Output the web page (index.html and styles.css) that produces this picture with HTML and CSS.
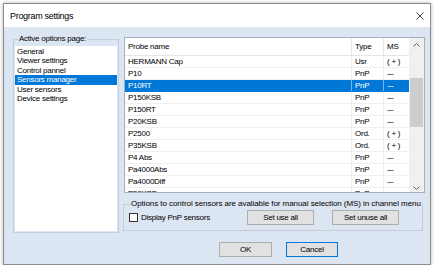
FILE: index.html
```html
<!DOCTYPE html>
<html lang="en">
<head>
    <meta charset="UTF-8">
    <meta name="viewport" content="width=device-width, initial-scale=1.0">
    <title>Program settings</title>
    <link rel="stylesheet" href="styles.css">
</head>
<body>
    <div class="window">
        <div class="titlebar">
            <span class="title">Program settings</span>
            <svg class="close" width="8" height="8" viewBox="0 0 8 8">
                <path d="M0.5 0.5 L7.5 7.5 M7.5 0.5 L0.5 7.5" stroke="#222" stroke-width="0.9" fill="none"/>
            </svg>
        </div>
        <div class="content">
            <div class="main">
                <div class="group pages">
                    <span class="group-title">Active options page:</span>
                    <ul class="pagelist">
                        <li>General</li>
                        <li>Viewer settings</li>
                        <li>Control pannel</li>
                        <li class="selected">Sensors manager</li>
                        <li>User sensors</li>
                        <li>Device settings</li>
                    </ul>
                </div>
                <div class="right">
                    <div class="grid">
                        <div class="table">
                            <div class="row head">
                                <span class="c-name">Probe name</span>
                                <span class="c-type">Type</span>
                                <span class="c-ms">MS</span>
                            </div>
                            <div class="row"><span class="c-name">HERMANN Cap</span><span class="c-type">Usr</span><span class="c-ms">( + )</span></div>
                            <div class="row"><span class="c-name">P10</span><span class="c-type">PnP</span><span class="c-ms dash">---</span></div>
                            <div class="row selected"><span class="c-name">P10RT</span><span class="c-type">PnP</span><span class="c-ms dash">---</span></div>
                            <div class="row"><span class="c-name">P150KSB</span><span class="c-type">PnP</span><span class="c-ms dash">---</span></div>
                            <div class="row"><span class="c-name">P150RT</span><span class="c-type">PnP</span><span class="c-ms dash">---</span></div>
                            <div class="row"><span class="c-name">P20KSB</span><span class="c-type">PnP</span><span class="c-ms dash">---</span></div>
                            <div class="row"><span class="c-name">P2500</span><span class="c-type">Ord.</span><span class="c-ms">( + )</span></div>
                            <div class="row"><span class="c-name">P35KSB</span><span class="c-type">Ord.</span><span class="c-ms">( + )</span></div>
                            <div class="row"><span class="c-name">P4 Abs</span><span class="c-type">PnP</span><span class="c-ms dash">---</span></div>
                            <div class="row"><span class="c-name">Pa4000Abs</span><span class="c-type">PnP</span><span class="c-ms dash">---</span></div>
                            <div class="row"><span class="c-name">Pa4000Diff</span><span class="c-type">PnP</span><span class="c-ms dash">---</span></div>
                            <div class="row"><span class="c-name">P50KSB</span><span class="c-type">PnP</span><span class="c-ms dash">---</span></div>
                        </div>
                        <div class="scrollbar">
                            <div class="sb-btn">
                                <svg width="15" height="6" viewBox="0 0 15 6"><path d="M4.5 4.5 L7.5 1.5 L10.5 4.5" stroke="#606060" fill="none"/></svg>
                            </div>
                            <div class="sb-track">
                                <div class="sb-thumb" style="margin-top: 26px; height: 49px;"></div>
                            </div>
                            <div class="sb-btn down">
                                <svg width="15" height="6" viewBox="0 0 15 6"><path d="M4.5 1.5 L7.5 4.5 L10.5 1.5" stroke="#606060" fill="none"/></svg>
                            </div>
                        </div>
                    </div>
                    <div class="group options">
                        <span class="group-title wide">Options to control sensors are avaliable for manual selection (MS) in channel menu</span>
                        <div class="options-row">
                            <label class="check"><span class="box"></span>Display PnP sensors</label>
                            <div class="actions">
                                <button class="button">Set use all</button>
                                <button class="button">Set unuse all</button>
                            </div>
                        </div>
                    </div>
                </div>
            </div>
            <div class="footer">
                <button class="button dialog">OK</button>
                <button class="button dialog default">Cancel</button>
            </div>
        </div>
    </div>
</body>
</html>
```

FILE: styles.css
```css
body {
    margin: 0;
    background-color: #fff;
    font-family: "Liberation Sans", Arial, sans-serif;
    font-size: 8px;
    letter-spacing: -0.25px;
    color: #000;
}
.window {
    margin: 3px 0 0 3px;
    width: 426px;
    height: 260px;
    border: 1px solid #8c8c8c;
    box-shadow: 0 0 4px rgba(0, 0, 0, 0.3);
    display: flex;
    flex-direction: column;
    background-color: #dce5f2;
}
.titlebar {
    height: 23px;
    flex-shrink: 0;
    background-color: #fff;
    display: flex;
    align-items: center;
    justify-content: space-between;
    padding: 0 6px;
}
.title {
    font-size: 9px;
    letter-spacing: -0.3px;
}
.content {
    flex: 1;
    padding: 10px 0 0 9px;
}
.main {
    display: flex;
    align-items: flex-start;
}
.group {
    box-sizing: border-box;
    border: 1px solid #c3ccd8;
    display: flex;
    flex-direction: column;
}
.group-title {
    align-self: flex-start;
    margin: -6px 0 0 4px;
    padding: 0 1px;
    line-height: 10px;
    white-space: nowrap;
    background-color: #dce5f2;
}
.group-title.wide {
    margin-left: 6px;
    letter-spacing: -0.06px;
}
.pages {
    margin-top: 2px;
    width: 106px;
    height: 194px;
}
.pagelist {
    flex: 1;
    list-style: none;
    margin: 2px 1px 1px;
    padding: 1px 0 0;
    background-color: #fff;
}
.pagelist li {
    height: 9.4px;
    line-height: 9.4px;
    padding-left: 2px;
}
.pagelist li.selected {
    background-color: #0078d7;
    color: #fff;
}
.right {
    margin-left: 4px;
}
.grid {
    margin-left: 1px;
    width: 301px;
    height: 156px;
    box-sizing: border-box;
    border: 1px solid #a7b0bc;
    background-color: #fff;
    display: flex;
}
.table {
    flex: 1;
    overflow: hidden;
}
.row {
    display: flex;
    height: 12px;
    line-height: 11px;
    box-sizing: border-box;
    border-bottom: 1px solid #f0f0f0;
}
.row.head {
    height: 18px;
    line-height: 17px;
    border-bottom-color: #e5e5e5;
}
.row span {
    box-sizing: border-box;
    white-space: nowrap;
}
.c-name {
    width: 226px;
    padding-left: 3px;
}
.c-type {
    width: 32px;
    padding-left: 3px;
    border-left: 1px solid #f0f0f0;
}
.c-ms {
    width: 26px;
    padding-left: 3px;
    border-left: 1px solid #f0f0f0;
}
.head .c-type,
.head .c-ms {
    border-left-color: #e5e5e5;
}
.dash {
    letter-spacing: -0.7px;
}
.row.selected {
    background-color: #0078d7;
    color: #fff;
    border-bottom-color: #0078d7;
}
.row.selected .c-type,
.row.selected .c-ms {
    border-left-color: #7fb5e6;
}
.scrollbar {
    width: 15px;
    background-color: #f0f0f0;
    display: flex;
    flex-direction: column;
}
.sb-btn {
    height: 14px;
    display: flex;
    align-items: center;
}
.sb-btn.down {
    align-items: flex-end;
    padding-bottom: 1px;
    box-sizing: border-box;
}
.sb-track {
    flex: 1;
}
.sb-thumb {
    margin: 0 1px;
    background-color: #cdcdcd;
}
.options {
    margin-top: 11px;
    width: 300px;
    height: 27px;
}
.options-row {
    display: flex;
    align-items: center;
    padding: 1px 23px 0 5px;
}
.check {
    display: flex;
    align-items: center;
    gap: 3px;
}
.box {
    width: 9px;
    height: 9px;
    box-sizing: border-box;
    border: 1px solid #333;
    background-color: #fff;
}
.actions {
    margin-left: auto;
    display: flex;
    gap: 18px;
}
.button {
    width: 67px;
    height: 15px;
    padding: 0;
    font-family: inherit;
    font-size: 8px;
    letter-spacing: -0.25px;
    color: #000;
    background-color: #e1e1e1;
    border: 1px solid #adadad;
}
.footer {
    display: flex;
    gap: 14px;
    margin-top: 9px;
    padding-left: 206px;
}
.button.dialog {
    width: 53px;
}
.button.default {
    width: 52px;
    border-color: #0078d7;
}
```
